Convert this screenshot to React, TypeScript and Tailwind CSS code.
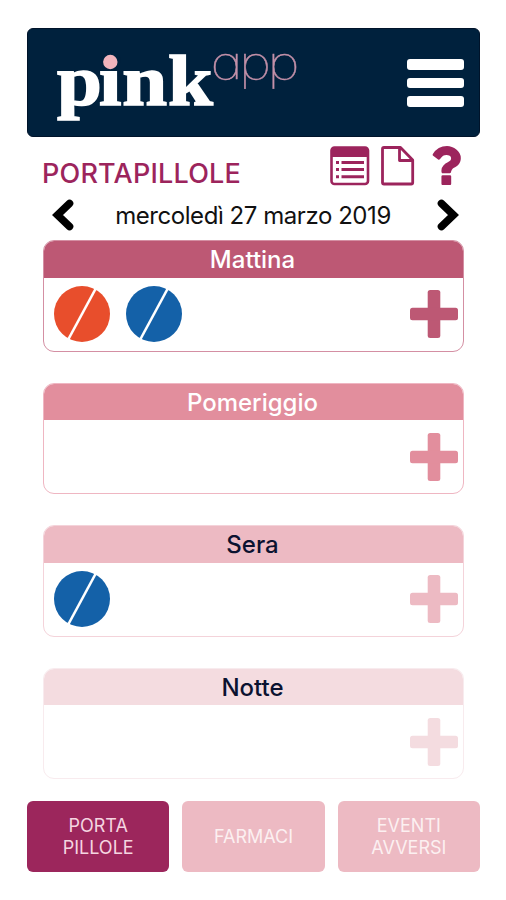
const slots = [
  {
    name: 'Mattina',
    pills: ['#e84e2c', '#1461a8'],
    header: 'bg-[#bd5874] text-white',
    border: 'border-[#d48fa3]',
    plus: 'text-[#bd5874]',
  },
  {
    name: 'Pomeriggio',
    pills: [],
    header: 'bg-[#e28e9d] text-white',
    border: 'border-[#efb6c2]',
    plus: 'text-[#e28e9d]',
  },
  {
    name: 'Sera',
    pills: ['#1461a8'],
    header: 'bg-[#edbac3] text-[#0b1230]',
    border: 'border-[#f4d3da]',
    plus: 'text-[#edbac3]',
  },
  {
    name: 'Notte',
    pills: [],
    header: 'bg-[#f4dce0] text-[#0b1230]',
    border: 'border-[#f8ebee]',
    plus: 'text-[#f4dce0]',
  },
];

const tabs = [
  { lines: ['PORTA', 'PILLOLE'], active: true },
  { lines: ['FARMACI'], active: false },
  { lines: ['EVENTI', 'AVVERSI'], active: false },
];

function Logo() {
  return (
    <svg width="250" height="80" viewBox="0 0 250 80" className="overflow-visible">
      <text
        x="1.8 39.3 60 101"
        y="57"
        fill="#fff"
        stroke="#fff"
        strokeWidth="1.6"
        fontSize="72"
        fontWeight="700"
        fontFamily="Liberation Serif, serif"
        transform="scale(1.12 1)"
      >
        pink
      </text>
      {/* the pink disc replaces the dot of the i */}
      <circle cx="56" cy="12.5" r="9.5" fill="#00213d" />
      <circle cx="55.3" cy="14" r="7.2" fill="#f2b5bd" />
      <text
        x="129.6"
        y="31"
        fill="#c391a9"
        stroke="#c391a9"
        strokeWidth="0.4"
        fontSize="46"
        fontWeight="100"
        fontFamily="Inter, sans-serif"
        letterSpacing="-3"
        transform="scale(1.2 1)"
        style={{ fontFeatureSettings: '"cv11"' }}
      >
        app
      </text>
    </svg>
  );
}

function Pill({ color }: { color: string }) {
  return (
    <svg width="56" height="56" viewBox="0 0 56 56">
      <circle cx="28" cy="28" r="28" fill={color} />
      <path d="M41.5 3L14.5 53" stroke="#fff" strokeWidth="2.6" />
    </svg>
  );
}

function Plus({ className }: { className: string }) {
  return (
    <svg width="48" height="48" viewBox="0 0 48 48" fill="currentColor" className={className}>
      <rect x="17.7" y="0" width="12.6" height="48" rx="2.5" />
      <rect x="0" y="17.7" width="48" height="12.6" rx="2.5" />
    </svg>
  );
}

function Chevron({ flip = false }: { flip?: boolean }) {
  return (
    <svg width="22" height="32" viewBox="0 0 22 32" fill="none" className={flip ? 'rotate-180' : ''}>
      <path d="M17.5 4.5L5.5 16L17.5 27.5" stroke="#000" strokeWidth="7.6" strokeLinecap="round" />
    </svg>
  );
}

export default function App() {
  return (
    <div className="flex h-[900px] w-[506px] flex-col bg-white pt-[28px] font-[Inter,sans-serif]">
      <header className="mr-[26px] ml-[27px] flex h-[109px] shrink-0 items-start justify-between rounded-md border border-[#00132a] bg-[#00213d] pl-[27px] pr-[15px]">
        <div className="pt-[19px]">
          <Logo />
        </div>
        <button className="mt-[30px] flex flex-col gap-2">
          <span className="h-[10.5px] w-[57px] rounded-[3px] bg-white" />
          <span className="h-[10.5px] w-[57px] rounded-[3px] bg-white" />
          <span className="h-[10.5px] w-[57px] rounded-[3px] bg-white" />
        </button>
      </header>

      <div className="flex h-[58px] shrink-0 items-start justify-between pl-[41px] pr-[45px]">
        <h1 className="mt-[21px] pl-px text-[27px] leading-8 font-medium tracking-[0.2px] text-[#9c245c]">PORTAPILLOLE</h1>
        <div className="mt-[9px] flex text-[#9c245c]">
          <svg width="40" height="40" viewBox="0 0 40 40" fill="none">
            <rect x="1.5" y="1.5" width="36.5" height="36.5" rx="3" stroke="currentColor" strokeWidth="2.6" />
            <path d="M1.5 2h36.5v9H1.5z" fill="currentColor" />
            <path
              d="M6 16.5h3M6 23.5h3M6 30.7h3M11.5 16.5H34M11.5 23.5H34M11.5 30.7H34"
              stroke="currentColor"
              strokeWidth="3"
            />
          </svg>
          <svg width="34" height="40" viewBox="0 0 34 40" fill="none" className="ml-[11px]">
            <path
              d="M3 1.5H19.5L31.7 14V36.5Q31.7 38 30.2 38H3Q1.5 38 1.5 36.5V3Q1.5 1.5 3 1.5ZM18.5 1.5V14.5H31.7"
              stroke="currentColor"
              strokeWidth="2.8"
              strokeLinejoin="round"
            />
          </svg>
          <svg width="29" height="39" viewBox="464 256 940 1280" fill="currentColor" className="ml-[17px]">
            <path d="M1088 1256v240q0 16-12 28t-28 12h-240q-16 0-28-12t-12-28v-240q0-16 12-28t28-12h240q16 0 28 12t12 28zm316-600q0 54-15.5 101t-35 76.5-55 59.5-57.5 43.5-61 35.5q-41 23-68.5 65t-27.5 67q0 17-12 32.5t-28 15.5h-240q-15 0-25.5-18.5t-10.5-37.5v-45q0-83 65-156.5t143-108.5q59-27 84-56t25-76q0-42-46.5-74t-107.5-32q-65 0-108 29-35 25-107 115-13 16-31 16-12 0-25-8l-164-125q-13-10-15.5-25t5.5-28q160-266 464-266 80 0 161 31t146 83 106 127.5 41 158.5z" />
          </svg>
        </div>
      </div>

      <div className="flex h-[40px] shrink-0 items-center justify-between pr-[47px] pl-[52px] pb-px">
        <Chevron />
        <p className="pt-0.5 pr-[5px] text-2xl tracking-[-0.44px] text-[#111]">mercoledì 27 marzo 2019</p>
        <Chevron flip />
      </div>

      <main className="mr-[42px] ml-[43px] mt-[5px] flex flex-col gap-[31px]">
        {slots.map((slot) => (
          <section key={slot.name} className={`h-[111.6px] overflow-hidden rounded-[11px] border ${slot.border}`}>
            <h2 className={`flex h-[36.5px] items-center justify-center pt-0.5 pr-0.5 text-2xl font-medium ${slot.header}`}>
              {slot.name}
            </h2>
            <div className="flex h-[73px] items-center justify-between pr-[5px] pl-[10px]">
              <div className="flex gap-[15.5px]">
                {slot.pills.map((color, idx) => (
                  <Pill key={idx} color={color} />
                ))}
              </div>
              <Plus className={slot.plus} />
            </div>
          </section>
        ))}
      </main>

      <nav className="mr-[26px] ml-[27px] mt-[21.5px] grid h-[71.5px] shrink-0 grid-cols-3 gap-[13px]">
        {tabs.map((tab) => (
          <button
            key={tab.lines[0]}
            className={`flex flex-col items-center justify-center rounded-md text-lg leading-[22px] ${
              tab.active ? 'bg-[#9c265c] text-[#f5d5e0]' : 'bg-[#edbac3] text-[#fcf0f1]'
            }`}
          >
            {tab.lines.map((line) => (
              <span key={line}>{line}</span>
            ))}
          </button>
        ))}
      </nav>
    </div>
  );
}
